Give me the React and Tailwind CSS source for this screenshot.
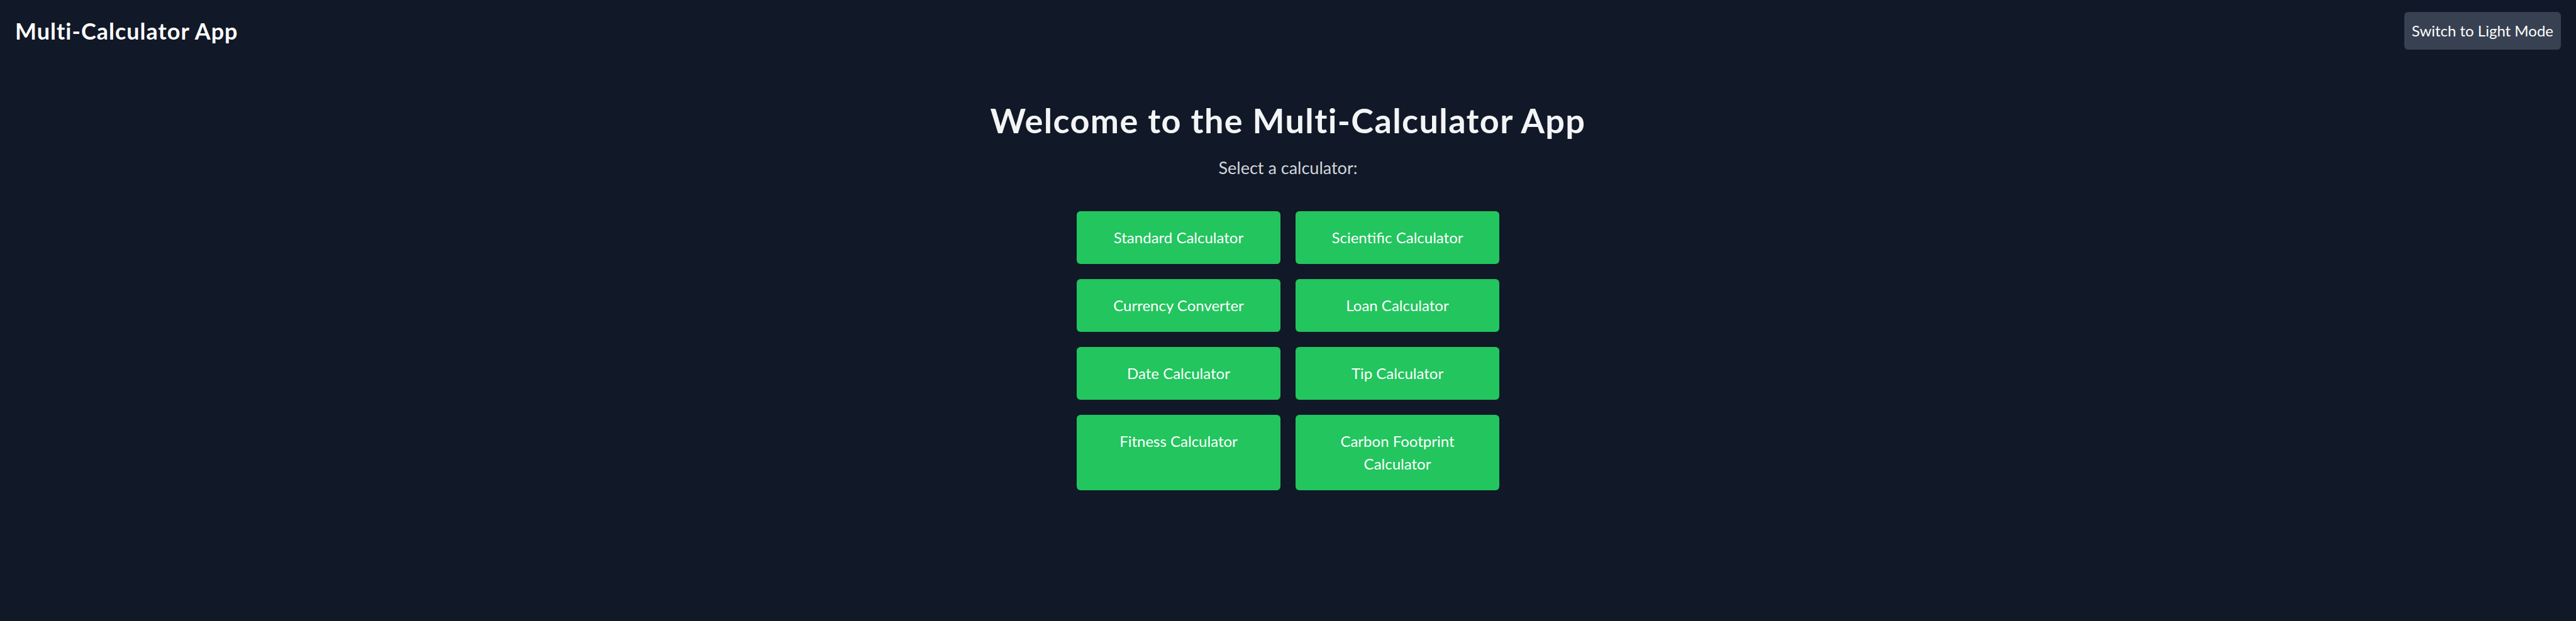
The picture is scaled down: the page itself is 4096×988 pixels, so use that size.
import React from 'react';

const CALCULATORS = [
  'Standard Calculator',
  'Scientific Calculator',
  'Currency Converter',
  'Loan Calculator',
  'Date Calculator',
  'Tip Calculator',
  'Fitness Calculator',
  'Carbon Footprint Calculator',
];

export default function App() {
  return (
    <div
      className="min-h-screen bg-[#111827] text-white"
      style={{ fontFamily: 'Lato, "Noto Sans", sans-serif' }}
    >
      <header className="flex items-center justify-between px-6 py-[19px]">
        <h1 className="text-[36px] font-bold leading-[48px] tracking-[1px] text-white">
          Multi-Calculator App
        </h1>
        <button className="rounded-md bg-[#374151] px-3 py-3 text-[24px] leading-9 text-white">
          Switch to Light Mode
        </button>
      </header>

      <main className="flex flex-col items-center pt-16">
        <h2 className="text-[54px] font-bold leading-[60px] tracking-[1.4px] text-[#f3f4f6]">
          Welcome to the Multi-Calculator App
        </h2>
        <p className="mt-6 text-[27px] leading-[42px] text-[#d1d5db]">Select a calculator:</p>

        <div className="mt-12 grid w-[672px] grid-cols-2 gap-6">
          {CALCULATORS.map((name) => (
            <button
              key={name}
              className="flex items-start justify-center rounded-md bg-[#22c55e] px-6 py-6 text-center text-[24px] leading-9 text-white"
            >
              {name}
            </button>
          ))}
        </div>
      </main>
    </div>
  );
}
